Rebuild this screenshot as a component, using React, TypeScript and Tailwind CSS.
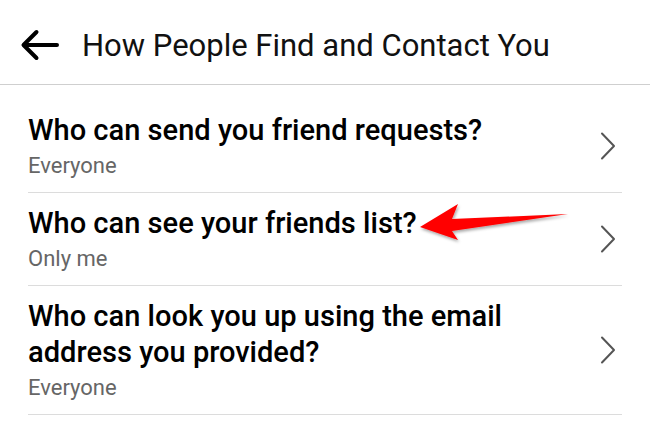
import React from 'react';

const rows = [
  { title: ['Who can send you friend requests?'], value: 'Everyone' },
  { title: ['Who can see your friends list?'], value: 'Only me' },
  { title: ['Who can look you up using the email', 'address you provided?'], value: 'Everyone' },
];

function Chevron() {
  return (
    <svg width="16" height="28" viewBox="0 0 16 28" fill="none" className="shrink-0">
      <path d="M2 1.5 L14 14 L2 26.5" stroke="#555" strokeWidth="2" strokeLinecap="round" strokeLinejoin="round" />
    </svg>
  );
}

export default function App() {
  return (
    <div className="relative w-[650px] h-[423px] overflow-hidden bg-white" style={{ fontFamily: 'Roboto, "Noto Sans", sans-serif' }}>
      {/* header */}
      <div className="flex items-center h-[85px] pt-[6px] border-b border-[#cfcfcf]">
        <svg width="40" height="34" viewBox="0 0 40 34" fill="none" className="ml-[20px]">
          <path d="M37 17 H4 M16.5 4 L3.5 17 L16.5 30" stroke="#000" strokeWidth="4" strokeLinecap="round" strokeLinejoin="round" />
        </svg>
        <h1 className="ml-[22px] text-[31px] leading-none text-[#111]">How People Find and Contact You</h1>
      </div>

      {/* settings list */}
      <div className="pt-[15px] pl-[28px] pr-[28px]">
        {rows.map((row, i) => (
          <div key={i} className="flex items-center justify-between border-b border-[#dcdcdc] pt-[12px] pb-[12px]">
            <div>
              {row.title.map((line, j) => (
                <div key={j} className="text-[29px] leading-[36px] font-medium text-black" style={{ fontFamily: '"Roboto Medium", Roboto, sans-serif' }}>{line}</div>
              ))}
              <div className="mt-[4px] text-[22px] leading-[28px] text-[#666]">{row.value}</div>
            </div>
            <div className="mr-[6px]">
              <Chevron />
            </div>
          </div>
        ))}
      </div>

      {/* red annotation arrow */}
      <svg className="absolute left-[412px] top-[199px]" width="162" height="46" viewBox="0 0 162 46">
        <defs>
          <filter id="sh" x="-10%" y="-30%" width="120%" height="160%">
            <feDropShadow dx="1" dy="2" stdDeviation="1.5" floodColor="#000" floodOpacity="0.35" />
          </filter>
        </defs>
        <polygon points="8,28 46,5 40,20 156,15 40,32 46,41" fill="#f00" filter="url(#sh)" />
      </svg>
    </div>
  );
}
